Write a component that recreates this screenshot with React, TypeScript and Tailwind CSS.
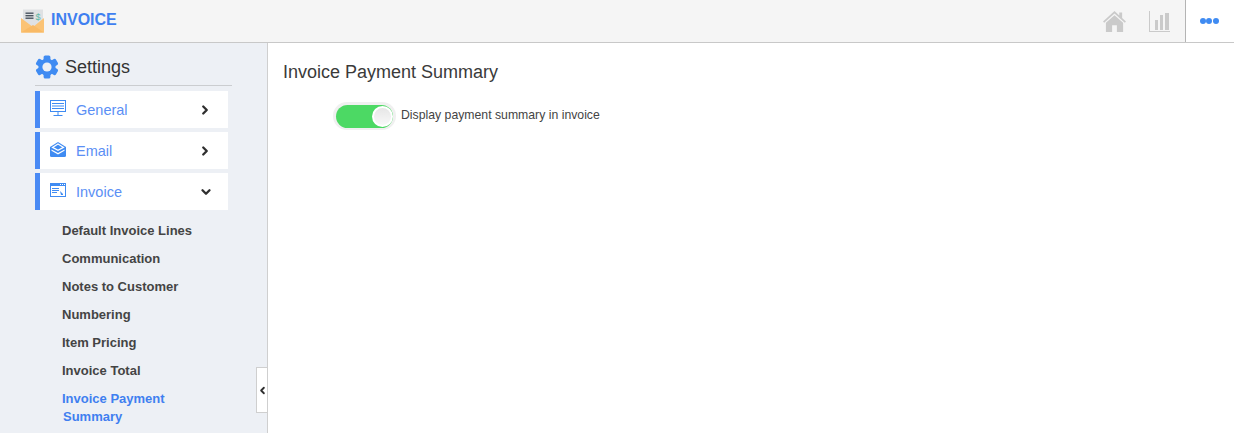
import { ChevronDown, ChevronLeft, ChevronRight } from "lucide-react";
import type { ReactNode } from "react";

/* ─── Icons ───────────────────────────────────────────────────────────── */
function InvoiceLogo() {
  return (
    <svg viewBox="0 0 24 24" className="w-[24px] h-[24px] -mt-[1px]" aria-hidden="true">
      <rect x="2" y="0.5" width="20" height="17" fill="#dfe1e3" />
      <rect x="4.5" y="3.5" width="8" height="1.4" fill="#4b5560" />
      <rect x="4.5" y="6" width="8" height="1.4" fill="#4b5560" />
      <rect x="4.5" y="8.5" width="8" height="1.4" fill="#4b5560" />
      <text x="14.5" y="10.5" fontSize="9" fill="#5fb8a5" fontFamily="Liberation Sans, sans-serif">$</text>
      <path d="M0 9 L12 18 L23 9 V23.5 H0 Z" fill="#fbc375" />
      <path d="M0 23.5 L12 16 L23 23.5 Z" fill="#f9ba65" />
    </svg>
  );
}

function GearIcon() {
  return (
    <svg viewBox="0 0 24 24" className="w-[24px] h-[24px]" aria-hidden="true">
      <g fill="#3f8bf2">
        <rect x="8.6" y="0.5" width="6.8" height="23" rx="1.6" />
        <rect x="8.6" y="0.5" width="6.8" height="23" rx="1.6" transform="rotate(60 12 12)" />
        <rect x="8.6" y="0.5" width="6.8" height="23" rx="1.6" transform="rotate(120 12 12)" />
        <circle cx="12" cy="12" r="8.6" />
      </g>
      <circle cx="12" cy="12" r="4.6" fill="#edf0f5" />
    </svg>
  );
}

function MonitorIcon() {
  return (
    <svg viewBox="0 0 16 16" className="w-[16px] h-[16px]" fill="none" stroke="#3f8bf2" aria-hidden="true">
      <rect x="0.5" y="0.5" width="15" height="11" />
      <path d="M2 3.5h12M2 6h12M2 8.5h12M8 12v3M3.5 15.5h9" />
    </svg>
  );
}

function MailIcon() {
  return (
    <svg viewBox="0 0 16 15" className="w-[16px] h-[15px]" aria-hidden="true">
      <path d="M8 0 L16 5 V13.5 Q16 15 14.5 15 H1.5 Q0 15 0 13.5 V5 Z" fill="#3f8bf2" />
      <path d="M8 2 L13.5 5.4 L8 8.4 L2.5 5.4 Z" fill="#3f8bf2" stroke="#fff" strokeWidth="1.2" />
      <path d="M1.5 7.5 L8 11 L14.5 7.5 V8.8 L8 12.4 L1.5 8.8 Z" fill="#fff" />
    </svg>
  );
}

function WindowIcon() {
  return (
    <svg viewBox="0 0 16 14" className="w-[16px] h-[14px]" aria-hidden="true">
      <rect x="0.5" y="0.5" width="15" height="13" fill="#fff" stroke="#3f8bf2" />
      <rect x="0" y="0" width="16" height="3" fill="#3f8bf2" />
      <rect x="10" y="1" width="1" height="1" fill="#fff" />
      <rect x="12" y="1" width="1" height="1" fill="#fff" />
      <rect x="14" y="1" width="1" height="1" fill="#fff" />
      <path d="M2 5.5h7M2 7.5h7M2 9.5h5" stroke="#3f8bf2" />
      <path d="M10 8 L13 11 V12 H11 Z" fill="#3f8bf2" />
    </svg>
  );
}

function HomeIcon() {
  return (
    <svg viewBox="0 0 24 22" className="w-[23px] h-[21px]" fill="#cacaca" aria-hidden="true">
      <path d="M12 0 L17 4.6 V1.5 H20 V7.4 L24 11 L22.8 12.2 L12 2.6 L1.2 12.2 L0 11 Z" />
      <path d="M12 4.5 L21 12.4 V22 H14.5 V15 H9.5 V22 H3 V12.4 Z" />
    </svg>
  );
}

function ChartIcon() {
  return (
    <svg viewBox="0 0 21 21" className="w-[21px] h-[21px]" fill="#cacaca" aria-hidden="true">
      <path d="M0 0h1v20h21v1H0z" />
      <rect x="6" y="9" width="3" height="10" />
      <rect x="11" y="4" width="3" height="15" />
      <rect x="16" y="2" width="4" height="17" />
    </svg>
  );
}

/* ─── Sidebar data ────────────────────────────────────────────────────── */
const menu: { label: string; icon: ReactNode; open?: boolean }[] = [
  { label: "General", icon: <MonitorIcon /> },
  { label: "Email", icon: <MailIcon /> },
  { label: "Invoice", icon: <WindowIcon />, open: true },
];

const subItems = [
  "Default Invoice Lines",
  "Communication",
  "Notes to Customer",
  "Numbering",
  "Item Pricing",
  "Invoice Total",
];

export default function App() {
  return (
    <div className="w-[1234px] h-[433px] overflow-hidden flex flex-col bg-white font-['Liberation_Sans',Arial,sans-serif]">
      {/* Top bar */}
      <header className="h-[43px] shrink-0 flex items-stretch bg-[#f5f5f5] border-b border-[#c8c8c8]">
        <div className="flex items-center pl-[21px] gap-[6px] flex-1">
          <InvoiceLogo />
          <span className="text-[16px] font-bold text-[#3f7ff0] -mt-[2px]">INVOICE</span>
        </div>
        <div className="flex items-center gap-[23px] pr-[15px]">
          <HomeIcon />
          <ChartIcon />
        </div>
        <div className="w-[49px] bg-white border-l border-[#b4b4b4] flex items-center justify-center gap-[0.5px] pr-[2px]">
          <span className="w-[6px] h-[6px] rounded-full bg-[#3f8bf2]" />
          <span className="w-[6px] h-[6px] rounded-full bg-[#3f8bf2]" />
          <span className="w-[6px] h-[6px] rounded-full bg-[#3f8bf2]" />
        </div>
      </header>

      <div className="flex flex-1 min-h-0">
        {/* Sidebar */}
        <aside className="relative w-[268px] shrink-0 bg-[#edf0f5] border-r border-[#cfcfcf] pl-[35px] pt-[9px]">
          <div className="w-[197px] h-[34px] flex items-center gap-[6px] border-b border-[#cbcdd0] pb-[3px]">
            <GearIcon />
            <span className="text-[18px] text-[#333]">Settings</span>
          </div>

          <ul className="mt-[5px] w-[193px] flex flex-col gap-[4px]">
            {menu.map((item) => (
              <li
                key={item.label}
                className="h-[37px] flex items-center bg-white border-l-[5px] border-[#4a8af4] pl-[10px]"
              >
                <span className="w-[16px] h-[16px] -mt-[3px] flex items-center justify-center">{item.icon}</span>
                <span className="ml-[10px] flex-1 text-[14.5px] text-[#5b8ff5] pt-[2px]">{item.label}</span>
                {item.open ? (
                  <ChevronDown className="w-[14px] h-[14px] mr-[15px] text-[#2f2f2f]" strokeWidth={4} />
                ) : (
                  <ChevronRight className="w-[14px] h-[14px] mr-[16px] text-[#2f2f2f]" strokeWidth={4} />
                )}
              </li>
            ))}
          </ul>

          <ul className="mt-[7px] pl-[27px] text-[13px] font-bold text-[#444] leading-[28px]">
            {subItems.map((s) => (
              <li key={s}>{s}</li>
            ))}
            <li className="text-[#3f7ff0] leading-[18px] pt-[5px]">
              Invoice Payment
              <br />
              <span className="pl-[1px]">Summary</span>
            </li>
          </ul>

          {/* Collapse handle */}
          <button className="absolute right-0 top-[324px] w-[11px] h-[46px] bg-white border border-r-0 border-[#cfcfcf] flex items-center justify-center">
            <ChevronLeft className="w-[11px] h-[11px] shrink-0 text-[#2f2f2f]" strokeWidth={4} />
          </button>
        </aside>

        {/* Main */}
        <main className="flex-1 pl-[15px] pt-[19px]">
          <h1 className="text-[18px] leading-[20px] text-[#3a3a3a]">Invoice Payment Summary</h1>
          <div className="mt-[20px] ml-[50px] flex items-center gap-[5px]">
            <span className="relative w-[63px] h-[28px] rounded-full bg-[#f0f0f0] pt-[3px] pb-[2px] px-[3px] flex">
              <span className="flex-1 rounded-full bg-[#4cd964]" />
              <span className="absolute right-[3px] top-[4px] w-[21px] h-[21px] rounded-full bg-gradient-to-b from-[#e6e6e6] to-[#f8f8f8] border-[2px] border-white" />
            </span>
            <span className="text-[12.25px] text-[#444] -mt-[2px]">Display payment summary in invoice</span>
          </div>
        </main>
      </div>
    </div>
  );
}
